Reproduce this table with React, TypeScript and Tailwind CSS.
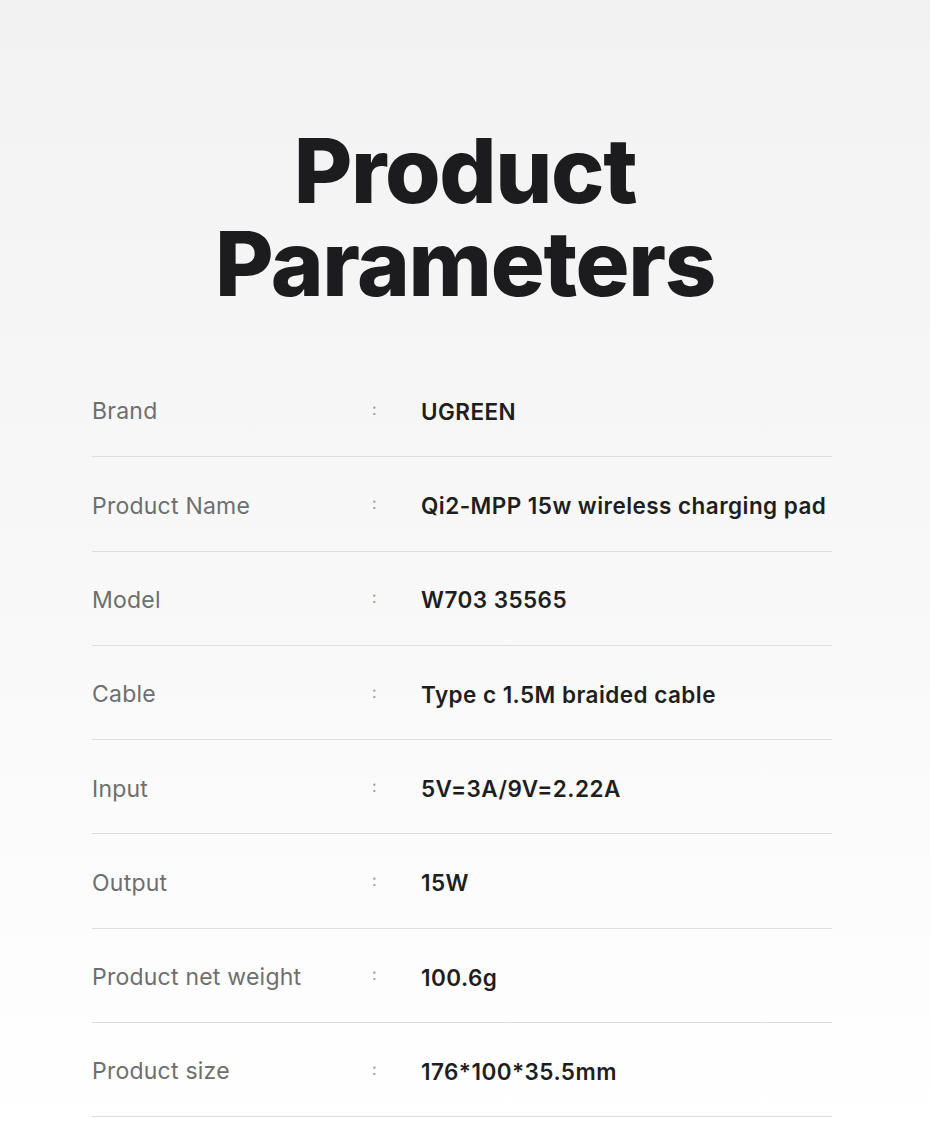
const rows: [string, string][] = [
  ["Brand", "UGREEN"],
  ["Product Name", "Qi2-MPP 15w wireless charging pad"],
  ["Model", "W703 35565"],
  ["Cable", "Type c 1.5M braided cable"],
  ["Input", "5V=3A/9V=2.22A"],
  ["Output", "15W"],
  ["Product net weight", "100.6g"],
  ["Product size", "176*100*35.5mm"],
];

export default function App() {
  return (
    <div className="min-h-[1141px] w-[930px] bg-gradient-to-b from-[#f2f2f2] via-[#f8f8f8] to-white font-['Inter',sans-serif]">
      <h1 className="pt-[124px] text-center text-[90px] font-extrabold tracking-[-0.015em] text-[#1c1c1e]">
        <span className="block h-[93px] leading-[93px]">Product</span>
        <span className="block h-[93px] leading-[93px]">Parameters</span>
      </h1>

      <div className="ml-[92px] mr-[98px] mt-[53px]">
        {rows.map(([label, value]) => (
          <div
            key={label}
            className="flex h-[94.3px] items-center border-b border-[#dedede] pt-[4px]"
          >
            <span className="w-[280px] text-[23px] tracking-[0.01em] text-[#6e6e6e]">{label}</span>
            <span className="w-[49px] -translate-y-[3px] text-[16px] text-[#9a9a9a]">:</span>
            <span className="text-[22.5px] font-semibold tracking-[0.02em] text-[#1e1e1e]">{value}</span>
          </div>
        ))}
      </div>
    </div>
  );
}
